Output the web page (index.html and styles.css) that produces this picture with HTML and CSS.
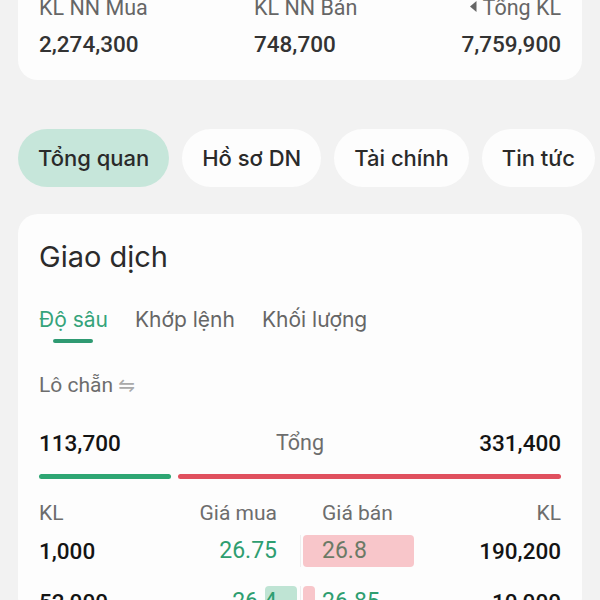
FILE: index.html
```html
<!DOCTYPE html>
<html lang="vi">
	<head>
		<meta charset="UTF-8">
		<title>Giao dịch</title>
		<link rel="stylesheet" href="styles.css">
	</head>
	<body>
		<div class="summary">
			<div class="stat">
				<div class="stat-label">KL NN Mua</div>
				<div class="stat-value">2,274,300</div>
			</div>
			<div class="stat">
				<div class="stat-label">KL NN Bán</div>
				<div class="stat-value">748,700</div>
			</div>
			<div class="stat stat-right">
				<div class="stat-label"><svg class="caret" width="7" height="11" viewBox="0 0 7 11"><path d="M6.5 0 L0 5.5 L6.5 11 Z" fill="#666"/></svg>Tổng KL</div>
				<div class="stat-value">7,759,900</div>
			</div>
		</div>

		<div class="pills">
			<div class="pill pill-active">Tổng quan</div>
			<div class="pill">Hồ sơ DN</div>
			<div class="pill">Tài chính</div>
			<div class="pill">Tin tức</div>
		</div>

		<div class="card">
			<h2 class="card-title">Giao dịch</h2>
			<ul class="tabs">
				<li class="tab tab-active">Độ sâu</li>
				<li class="tab">Khớp lệnh</li>
				<li class="tab">Khối lượng</li>
			</ul>

			<div class="lot">Lô chẵn <span class="swap">⇋</span></div>

			<div class="total">
				<span class="num">113,700</span>
				<span class="total-label">Tổng</span>
				<span class="num">331,400</span>
			</div>
			<div class="ratio">
				<span class="ratio-buy" style="flex-grow: 113700"></span>
				<span class="ratio-sell" style="flex-grow: 331400"></span>
			</div>

			<div class="book-row book-head">
				<div class="side side-buy">
					<span>KL</span>
					<span class="price">Giá mua</span>
				</div>
				<div class="split"></div>
				<div class="side side-sell">
					<span class="price">Giá bán</span>
					<span>KL</span>
				</div>
			</div>

			<div class="book-row">
				<div class="side side-buy">
					<span class="num">1,000</span>
					<span class="price up">26.75</span>
				</div>
				<div class="split"></div>
				<div class="side side-sell">
					<span class="vol vol-sell" style="width: 111px"></span>
					<span class="price ref">26.8</span>
					<span class="num">190,200</span>
				</div>
			</div>

			<div class="book-row">
				<div class="side side-buy">
					<span class="vol vol-buy" style="width: 32px"></span>
					<span class="num">52,000</span>
					<span class="price up">26.4</span>
				</div>
				<div class="split"></div>
				<div class="side side-sell">
					<span class="vol vol-sell" style="width: 12px"></span>
					<span class="price up">26.85</span>
					<span class="num">10,000</span>
				</div>
			</div>
		</div>
	</body>
</html>
```

FILE: styles.css
```css
* {
	margin: 0;
	padding: 0;
	box-sizing: border-box;
	list-style: none;
}

body {
	background-color: #f2f2f2;
	font-family: Roboto, "Noto Sans", sans-serif;
	color: #222;
	overflow: hidden;
}

.summary {
	display: grid;
	grid-template-columns: 215px 1fr auto;
	margin: -20px 18px 0 18px;
	padding: 16px 21px 22px;
	background-color: #fdfdfd;
	border-radius: 0 0 20px 20px;
}

.stat-label {
	font-size: 21.5px;
	line-height: 24px;
	color: #666;
}

.stat-right {
	text-align: right;
}

.caret {
	margin-right: 6px;
	vertical-align: 3px;
}

.stat-value {
	margin-top: 10px;
	font-size: 22.5px;
	line-height: 28px;
	font-weight: 500;
	color: #333;
}

.pills {
	display: flex;
	gap: 13px;
	margin-top: 49px;
	padding-left: 18px;
	white-space: nowrap;
}

.pill {
	flex: none;
	height: 58px;
	padding: 0 20px;
	border-radius: 29px;
	background-color: #fdfdfd;
	font-family: Inter, Roboto, sans-serif;
	font-size: 22px;
	font-weight: 500;
	line-height: 58px;
	color: #2a2a2a;
}

.pill-active {
	background-color: #c6e6da;
}

.card {
	margin: 27px 18px 0 18px;
	padding: 26px 21px 0;
	background-color: #fdfdfd;
	border-radius: 20px;
}

.card-title {
	font-family: Inter, Roboto, sans-serif;
	font-size: 29px;
	line-height: 34px;
	font-weight: 400;
	color: #2b2b2b;
}

.tabs {
	display: flex;
	gap: 27px;
	margin-top: 32px;
}

.tab {
	font-family: Inter, Roboto, sans-serif;
	font-size: 21px;
	line-height: 28px;
	color: #666;
	padding-bottom: 9px;
}

.tab-active {
	color: #35a37a;
}

.tab-active::after {
	content: "";
	display: block;
	width: 40px;
	height: 4px;
	margin: 5px auto 0;
	border-radius: 2px;
	background-color: #2f9a72;
}

.tab:not(.tab-active) {
	padding-bottom: 18px;
}

.lot {
	margin-top: 20px;
	font-size: 21px;
	line-height: 26px;
	color: #6d6d6d;
}

.swap {
	font-family: "DejaVu Sans", sans-serif;
	font-size: 20px;
	color: #aaa;
}

.total {
	display: flex;
	justify-content: space-between;
	margin-top: 31px;
	line-height: 28px;
}

.num {
	position: relative;
	font-size: 22.5px;
	font-weight: 500;
	color: #141414;
}

.total-label {
	font-size: 21.5px;
	color: #6d6d6d;
}

.ratio {
	display: flex;
	gap: 7px;
	margin-top: 17px;
}

.ratio span {
	height: 5px;
	border-radius: 3px;
}

.ratio-buy {
	background-color: #2ea673;
}

.ratio-sell {
	background-color: #e0505e;
}

.book-row {
	display: grid;
	grid-template-columns: 1fr 6px 1fr;
	height: 32px;
	margin-top: 19px;
	line-height: 32px;
}

.book-head {
	margin-top: 20px;
	height: 28px;
	line-height: 28px;
	font-size: 21px;
	color: #6d6d6d;
}

.book-head + .book-row {
	margin-top: 8px;
}

.side {
	position: relative;
	display: flex;
	justify-content: space-between;
}

.side-buy .price {
	padding-right: 20px;
}

.side-sell .price {
	padding-left: 19px;
}

.price {
	position: relative;
	font-size: 23px;
}

.book-head .price {
	font-size: 21px;
}

.split {
	width: 1px;
	margin: 0 auto;
	background-color: #eee;
}

.book-head .split {
	background-color: transparent;
}

.vol {
	position: absolute;
	top: 0;
	bottom: 0;
	border-radius: 4px;
}

.vol-sell {
	left: 0;
	background-color: #f8c6ca;
}

.vol-buy {
	right: 0;
	background-color: #bfe4d4;
}

.up {
	color: #2e9e70;
}

.ref {
	color: #6b7a66;
}
```
